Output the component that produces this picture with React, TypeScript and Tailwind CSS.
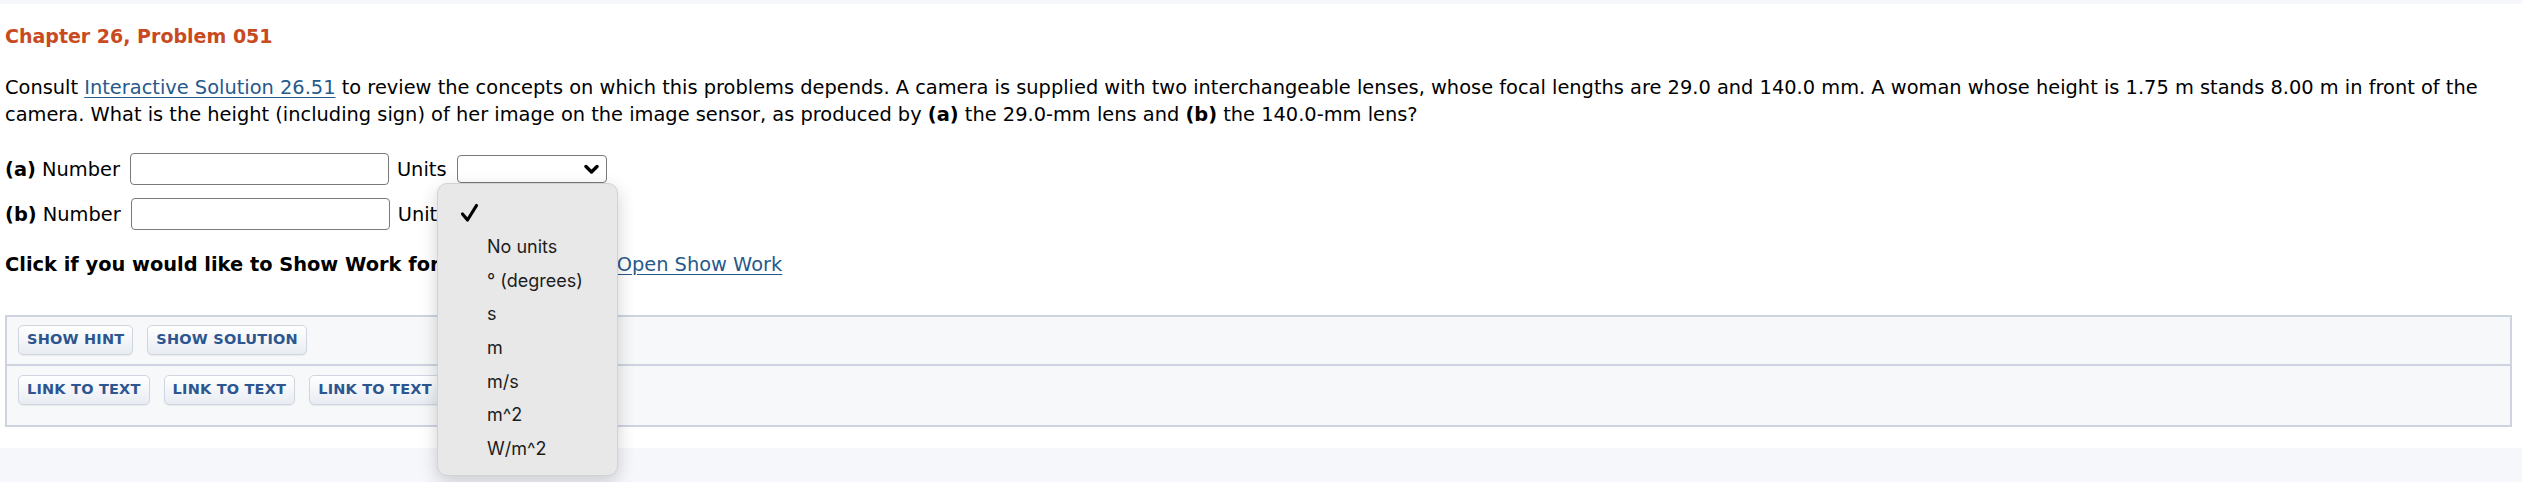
import React from "react"

const font = "font-['DejaVu_Sans',Verdana,sans-serif]"

function Chevron() {
  return (
    <svg width="15" height="11" viewBox="0 0 15 11" className="block">
      <polyline points="2,2.5 7.5,8 13,2.5" fill="none" stroke="#000" strokeWidth="3.4" strokeLinecap="round" strokeLinejoin="round" />
    </svg>
  )
}

function UnitSelect() {
  return (
    <div className="ml-[11px] flex h-[28px] w-[150px] items-center justify-end rounded-[4px] border-[1.5px] border-[#7a7a7a] bg-white pr-[7px]">
      <Chevron />
    </div>
  )
}

function AnswerRow({ part, className = "" }: { part: string; className?: string }) {
  return (
    <div className={"flex h-[32px] items-center " + className}>
      <span className="leading-[27px]">
        <b>({part})</b> Number
      </span>
      <input className="ml-[10px] h-[32px] w-[259px] rounded-[4px] border-[1.5px] border-[#7a7a7a] bg-white outline-none" />
      <span className="ml-[8px] leading-[27px]">Units</span>
      <UnitSelect />
    </div>
  )
}

function PanelButton({ label }: { label: string }) {
  return (
    <button className="h-[30px] rounded-[5px] border border-[#cfd6e0] bg-gradient-to-b from-white to-[#e8ecf2] px-[8px] text-[14.5px] font-bold tracking-[0.2px] text-[#2d5690] shadow-[0_1px_1px_rgba(0,0,0,0.06)]">
      {label}
    </button>
  )
}

const units = ["No units", "° (degrees)", "s", "m", "m/s", "m^2", "W/m^2"]

export default function App() {
  return (
    <div className={"relative min-h-[482px] bg-white text-[19.4px] text-black " + font}>
      <div className="h-[4px] bg-[#f5f7fa]" />

      <div className="pl-[5px] pr-[10px]">
        <h2 className="mt-[20px] text-[19px] font-bold leading-[24px] text-[#c84a1e]">Chapter 26, Problem 051</h2>

        <p className="mt-[26px] leading-[27px]">
          Consult{" "}
          <a className="text-[#27598b] underline underline-offset-[3px]">Interactive Solution 26.51</a> to review the
          concepts on which this problems depends. A camera is supplied with two interchangeable lenses, whose focal
          lengths are 29.0 and 140.0 mm. A woman whose height is 1.75 m stands 8.00 m in front of the camera. What is
          the height (including sign) of her image on the image sensor, as produced by <b>(a)</b> the 29.0-mm lens and{" "}
          <b>(b)</b> the 140.0-mm lens?
        </p>

        <AnswerRow part="a" className="mt-[25px]" />
        <AnswerRow part="b" className="mt-[13px]" />

        <p className="mt-[21px] leading-[27px]">
          <b>Click if you would like to Show Work for this question:</b>{" "}
          <a className="ml-[13px] text-[#27598b] underline underline-offset-[3px]">Open Show Work</a>
        </p>

        {/* hint / link panel */}
        <div className="mt-[37px] border-2 border-[#cdd4df] bg-[#f6f8fa]">
          <div className="flex gap-[14px] border-b-2 border-[#cdd4df] pb-[9px] pl-[11px] pt-[8px]">
            <PanelButton label="SHOW HINT" />
            <PanelButton label="SHOW SOLUTION" />
          </div>
          <div className="flex gap-[14px] pb-[20px] pl-[11px] pt-[9px]">
            <PanelButton label="LINK TO TEXT" />
            <PanelButton label="LINK TO TEXT" />
            <PanelButton label="LINK TO TEXT" />
          </div>
        </div>
      </div>

      <div className="mt-[21px] h-[36px] bg-[#f5f7fa]" />

      {/* open units menu */}
      <div className="absolute left-[437px] top-[183px] h-[293px] w-[181px] rounded-[10px] border border-[#d2d2d2] bg-[#e8e8e8] pt-[12px] font-['Inter',sans-serif] text-[18px] text-[#1c1c1c] shadow-[0_6px_18px_rgba(0,0,0,0.18)]">
        <div className="flex h-[34px] items-center pl-[22px]">
          <svg width="19" height="20" viewBox="0 0 19 20">
            <polyline points="2.5,11 7.5,17 16.5,2.5" fill="none" stroke="#000" strokeWidth="3.2" strokeLinecap="round" strokeLinejoin="round" />
          </svg>
        </div>
        {units.map((u) => (
          <div key={u} className="flex h-[33.6px] items-center pl-[49px]">
            {u}
          </div>
        ))}
      </div>
    </div>
  )
}
